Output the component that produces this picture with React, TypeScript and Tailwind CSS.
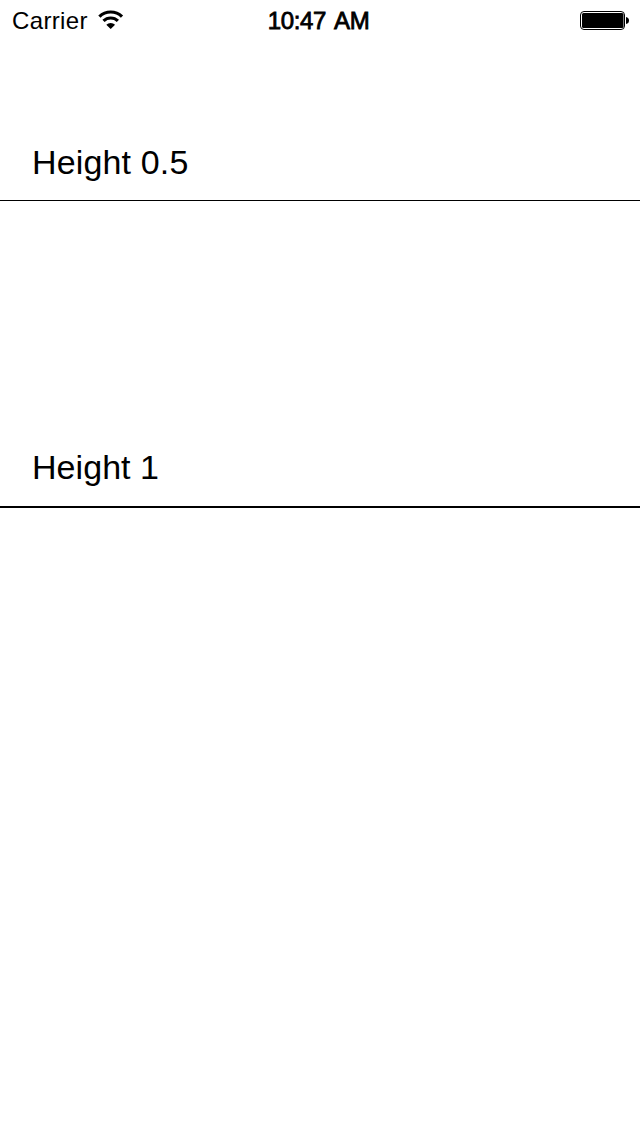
import React from "react";

function WifiIcon() {
  return (
    <svg className="block h-[20px] w-[26px]" viewBox="0 0 26 20" fill="none" stroke="#000">
      <path d="M1.4 6.6 A16.2 16.2 0 0 1 24 6.6" strokeWidth="3.2" />
      <path d="M5.5 10.9 A10.4 10.4 0 0 1 19.9 10.9" strokeWidth="3.2" />
      <path d="M12.7 19 L8.3 14.7 A6.3 6.3 0 0 1 17.1 14.7 Z" fill="#000" stroke="none" />
    </svg>
  );
}

function BatteryIcon() {
  return (
    <svg className="block h-[20px] w-[50px]" viewBox="0 0 50 20">
      <rect x="0.5" y="1.5" width="44" height="18" rx="3.5" fill="none" stroke="#000" />
      <rect x="2" y="3" width="41.5" height="15" rx="1.5" fill="#000" />
      <path d="M46 7 Q49 7.5 49 10.5 Q49 13.5 46 14 Z" fill="#000" />
    </svg>
  );
}

export default function App() {
  return (
    <main className="flex h-[1136px] w-[640px] flex-col overflow-hidden bg-white font-['Liberation_Sans',Arial,sans-serif] text-black">
      <header className="grid h-10 grid-cols-[201px_211px_1fr] items-center pl-3 pr-[10px]">
        <div className="flex items-center gap-[10px]">
          <span className="pt-[2px] text-[24px] leading-[38px] tracking-[0.35px]">Carrier</span>
          <WifiIcon />
        </div>
        <time className="pt-[2px] text-center text-[24px] leading-[38px] tracking-[-0.35px] [word-spacing:3px] [-webkit-text-stroke:0.8px_#000]">10:47 AM</time>
        <div className="flex justify-end"><BatteryIcon /></div>
      </header>
      <section className="flex h-[161px] flex-col justify-end border-b border-black pb-[18px] pl-8">
        <p className="text-[34px] leading-10 tracking-[0.15px]">Height 0.5</p>
      </section>
      <section className="flex h-[307px] flex-col justify-end border-b-2 border-black pb-[19px] pl-8">
        <p className="text-[34px] leading-10 tracking-[0.05px]">Height 1</p>
      </section>
    </main>
  );
}
